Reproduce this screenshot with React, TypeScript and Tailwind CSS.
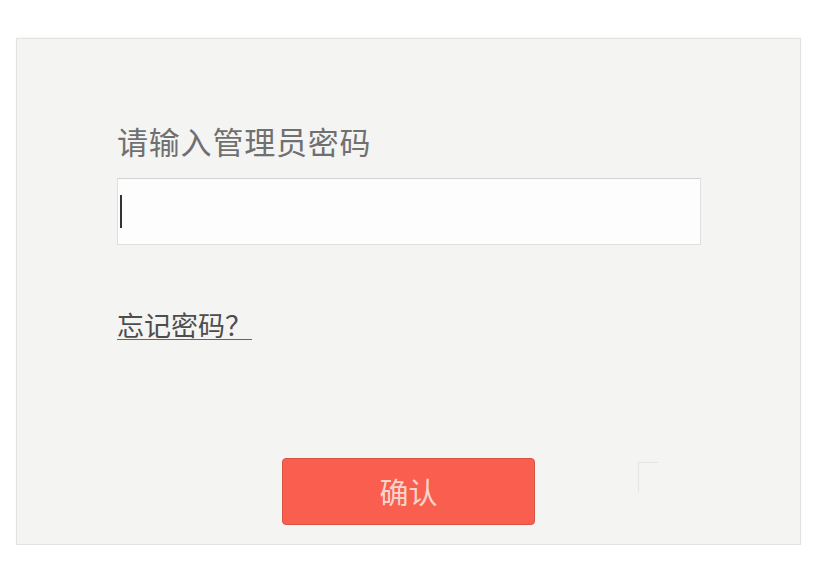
export default function App() {
  const cjk = { fontFamily: '"Noto Sans CJK SC", "Noto Sans", sans-serif' };

  return (
    <div className="min-h-[574px] w-[836px] bg-white pl-[16px] pt-[38px]" style={cjk}>
      <div className="relative h-[507px] w-[785px] border border-[#e2e2e2] bg-[#f4f4f3] pl-[100px] pt-[86px] shadow-[0_-1px_3px_rgba(0,0,0,0.04)]">
        <p className="text-[31px] leading-[31px] tracking-[0.8px] text-[#707070]">请输入管理员密码</p>

        <div className="mt-[22px] flex h-[67px] w-[584px] items-center border border-[#e0e0e0] border-t-[#d2d2d2] bg-[#fdfdfd] pl-[2px]">
          <span className="h-[33px] w-[2px] bg-[#333]" />
        </div>

        <a className="mt-[66px] block w-fit text-[27px] leading-[27px] text-[#4d4d4d] underline decoration-[#666] decoration-1 underline-offset-[3px]">
          忘记密码？
        </a>

        <button className="mt-[120px] ml-[165px] block h-[67px] w-[253px] rounded-[4px] border border-[#d85445] bg-[#fa5e4e] text-[29px] text-[#f8d4cc]">
          确认
        </button>

        <div className="absolute left-[621px] top-[423px] h-[30px] w-[20px] border-l border-t border-[#e4e4e4]" />
      </div>
    </div>
  );
}
